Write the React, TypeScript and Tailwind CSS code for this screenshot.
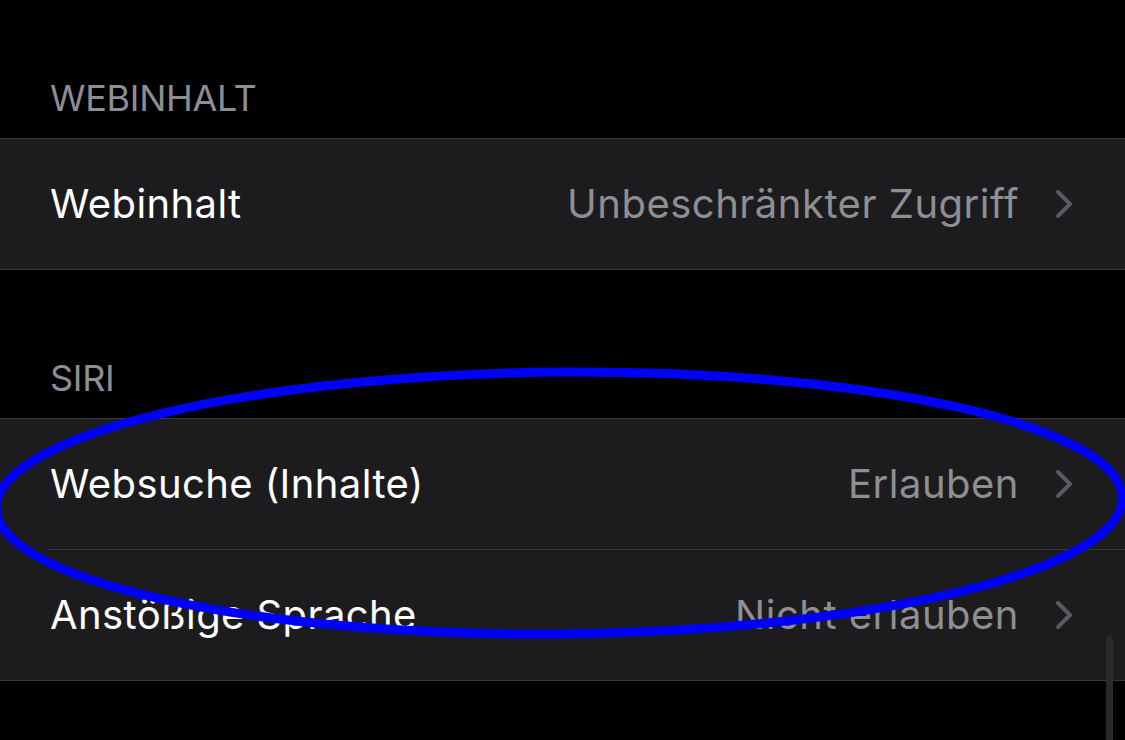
import React from 'react';

interface Row {
  label: string;
  value: string;
}

const Chevron = () => (
  <svg width="18" height="30" viewBox="0 0 18 30" className="shrink-0">
    <path
      d="M3 3 L15 15 L3 27"
      fill="none"
      stroke="#5b5b5f"
      strokeWidth="4"
      strokeLinecap="round"
      strokeLinejoin="round"
    />
  </svg>
);

const SettingsGroup: React.FC<{ rows: Row[] }> = ({ rows }) => (
  <div className="bg-[#1c1c1e] border-y border-[#38383a]">
    {rows.map((row, i) => (
      <div key={row.label}>
        {i > 0 && <div className="ml-[48px] h-px bg-[#38383a]" />}
        <div className="h-[130px] flex items-center pl-[50px] pr-[52px]">
          <span className="text-[40px] leading-none text-white tracking-[0.4px]">{row.label}</span>
          <span className="ml-auto text-[40px] leading-none text-[#8e8e93] mr-[36px] tracking-[0.5px]">
            {row.value}
          </span>
          <Chevron />
        </div>
      </div>
    ))}
  </div>
);

const SectionHeader: React.FC<{ title: string }> = ({ title }) => (
  <div className="px-[50px] pb-[22px] text-[36px] leading-[36px] text-[#8d8d93] tracking-[-0.3px]">
    {title}
  </div>
);

export default function App() {
  return (
    <div
      className="relative w-[1125px] h-[740px] bg-black overflow-hidden"
      style={{ fontFamily: 'Inter, "Noto Sans", sans-serif' }}
    >
      <div className="h-[80px]" />
      <SectionHeader title="WEBINHALT" />
      <SettingsGroup rows={[{ label: 'Webinhalt', value: 'Unbeschränkter Zugriff' }]} />
      <div className="h-[90px]" />
      <SectionHeader title="SIRI" />
      <SettingsGroup
        rows={[
          { label: 'Websuche (Inhalte)', value: 'Erlauben' },
          { label: 'Anstößige Sprache', value: 'Nicht erlauben' },
        ]}
      />

      {/* scroll indicator */}
      <div className="absolute left-[1106px] top-[636px] w-[7px] h-[130px] rounded-full bg-[#2a2a2c]" />

      {/* hand-drawn highlight */}
      <svg className="absolute inset-0 pointer-events-none" width="1125" height="740">
        <ellipse
          cx="559"
          cy="503"
          rx="563"
          ry="131"
          fill="none"
          stroke="#0000ff"
          strokeWidth="9"
          transform="rotate(-0.5 559 503)"
        />
      </svg>
    </div>
  );
}
